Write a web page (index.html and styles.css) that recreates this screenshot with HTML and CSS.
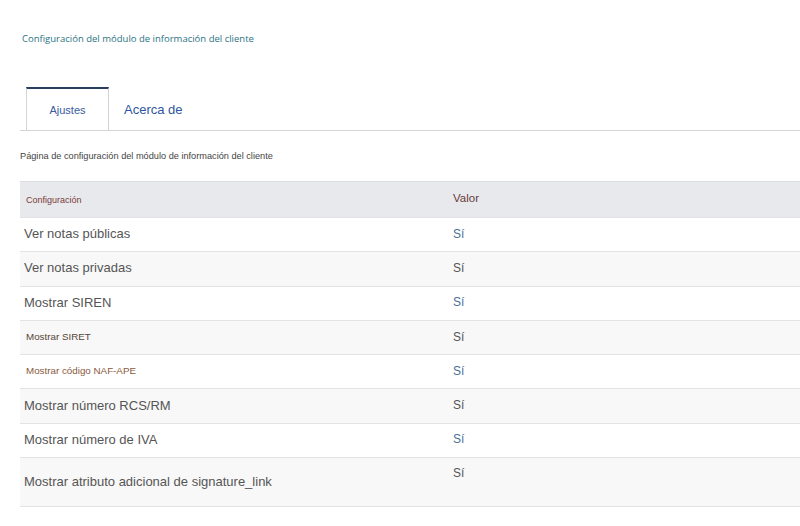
FILE: index.html
```html
<!DOCTYPE html>
<html lang="es">
<head>
    <meta charset="UTF-8">
    <title>Configuración del módulo de información del cliente</title>
    <link rel="stylesheet" href="styles.css">
</head>
<body>
    <div class="page">
        <div class="titulo">Configuración del módulo de información del cliente</div>

        <div class="tabs">
            <div class="tab activo">Ajustes</div>
            <div class="tab">Acerca de</div>
        </div>

        <div class="descripcion">Página de configuración del módulo de información del cliente</div>

        <table class="tabla">
            <tr class="cabecera">
                <td class="col-conf">Configuración</td>
                <td class="col-valor">Valor</td>
            </tr>
            <tr class="fila">
                <td>Ver notas públicas</td>
                <td class="si azul">Sí</td>
            </tr>
            <tr class="fila par">
                <td>Ver notas privadas</td>
                <td class="si">Sí</td>
            </tr>
            <tr class="fila">
                <td>Mostrar SIREN</td>
                <td class="si azul">Sí</td>
            </tr>
            <tr class="fila par">
                <td class="pequeno">Mostrar SIRET</td>
                <td class="si">Sí</td>
            </tr>
            <tr class="fila">
                <td class="pequeno marron">Mostrar código NAF-APE</td>
                <td class="si azul">Sí</td>
            </tr>
            <tr class="fila par">
                <td>Mostrar número RCS/RM</td>
                <td class="si">Sí</td>
            </tr>
            <tr class="fila">
                <td>Mostrar número de IVA</td>
                <td class="si azul">Sí</td>
            </tr>
            <tr class="fila par alta">
                <td>Mostrar atributo adicional de signature_link</td>
                <td class="si">Sí</td>
            </tr>
        </table>
    </div>
</body>
</html>
```

FILE: styles.css
```css
body {
    margin: 0;
    font-family: "Liberation Sans", Arial, sans-serif;
    background-color: #fff;
    color: #555;
}
.page {
    padding-left: 20px;
}
.titulo {
    font-family: "Open Sans", sans-serif;
    font-size: 9.5px;
    color: #2c7383;
    padding-left: 2px;
    padding-top: 32px;
    height: 87px;
    box-sizing: border-box;
}
.tabs {
    display: flex;
    align-items: flex-end;
    height: 43px;
    border-bottom: 1px solid #d4d4d8;
}
.tab {
    font-size: 13px;
    color: #2e56a0;
    padding: 0 16px 13px 15px;
}
.tab.activo {
    margin-left: 6px;
    width: 83px;
    height: 43px;
    box-sizing: border-box;
    padding: 15px 0 0 0;
    text-align: center;
    font-size: 11px;
    color: #3a5aa0;
    border-top: 2px solid #2a3f5f;
    border-left: 1px solid #d4d4d8;
    border-right: 1px solid #d4d4d8;
}
.descripcion {
    font-size: 9.2px;
    color: #444;
    padding-top: 20px;
    height: 50px;
    box-sizing: border-box;
}
.tabla {
    width: 780px;
    border-collapse: collapse;
}
.cabecera {
    background-color: #e8e9ed;
    height: 36px;
    border-top: 1px solid #dcdde2;
}
.col-conf {
    font-size: 9px;
    color: #7a3a3a;
    padding-left: 6px;
    padding-top: 1px;
}
.col-valor {
    font-size: 11.5px;
    color: #6a3a3a;
    width: 346px;
    padding-left: 1px;
    padding-bottom: 4px;
}
.fila {
    height: 34.3px;
    border-top: 1px solid #e3e3e6;
    border-bottom: 1px solid #e3e3e6;
}
.fila.par {
    background-color: #f8f8f8;
}
.fila td {
    font-size: 13px;
    color: #555;
    padding: 0 0 2px 4px;
    vertical-align: middle;
}
.fila td.pequeno {
    font-size: 9.8px;
    color: #574638;
    padding-left: 6px;
}
.fila td.marron {
    color: #8a5a3c;
}
.fila td.si {
    padding-left: 1px;
    font-size: 12px;
}
.fila td.azul {
    color: #4a7098;
}
.fila.alta {
    height: 49px;
}
.fila.alta td.si {
    vertical-align: top;
    padding-top: 8px;
}
```
